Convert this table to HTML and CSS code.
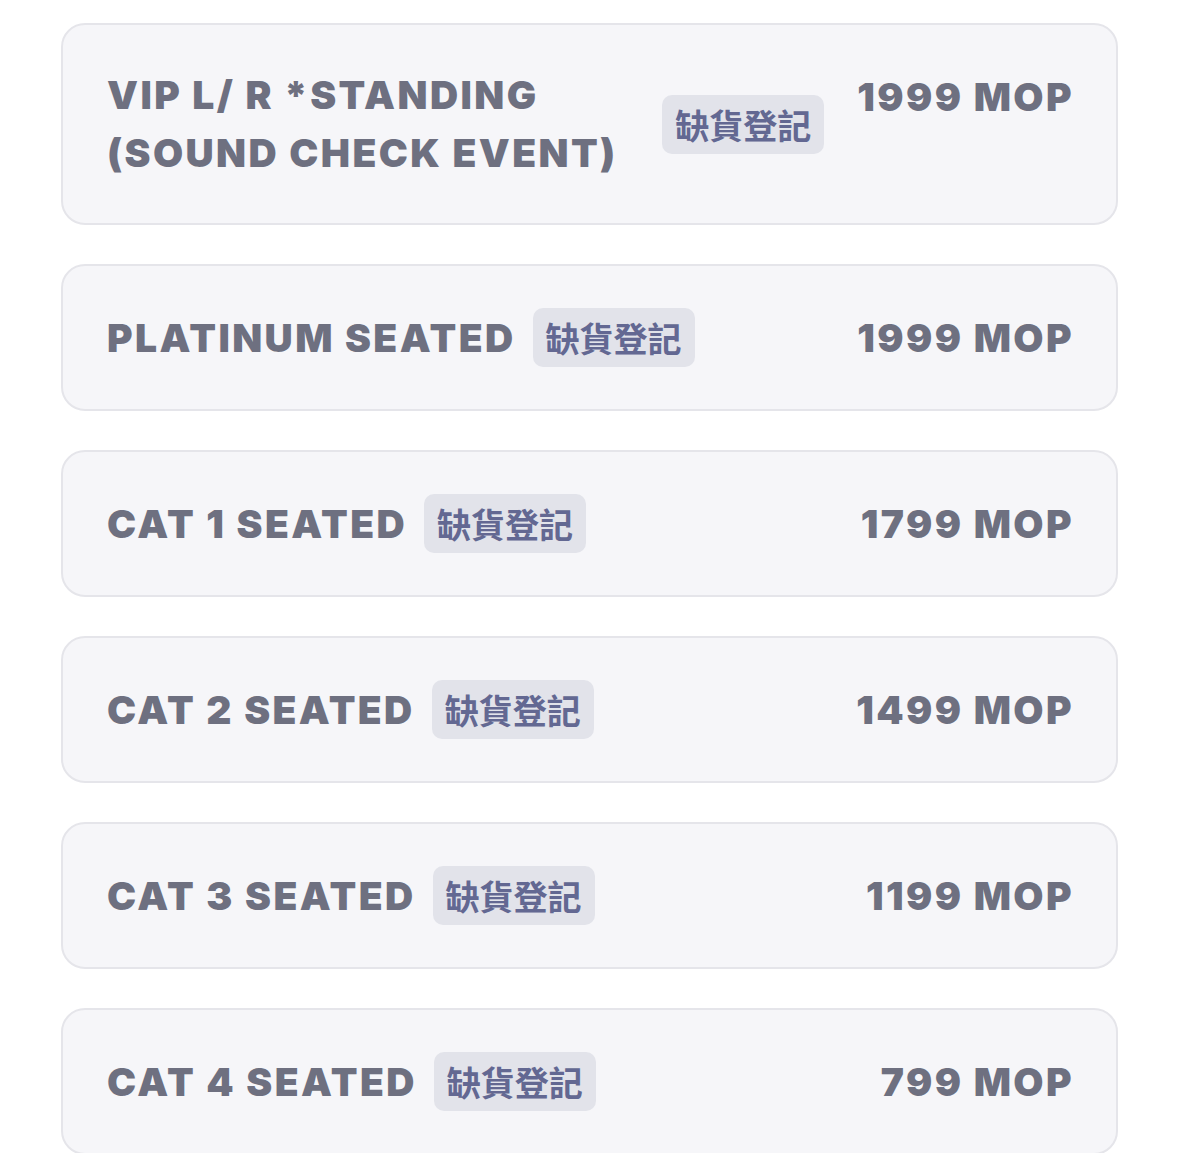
FILE: index.html
```html
<!DOCTYPE html>
<html>
<head>
  <meta name="viewport" content="width=device-width">
  <title>Tickets</title>
  <link rel="stylesheet" href="styles.css">
</head>
<body>
  <div class="list">
    <div class="ticket">
      <div class="info">
        <span class="name">VIP L/ R *STANDING (SOUND CHECK EVENT)</span>
        <span class="tag">缺貨登記</span>
      </div>
      <span class="price">1999 MOP</span>
    </div>
    <div class="ticket">
      <div class="info">
        <span class="name">PLATINUM SEATED</span>
        <span class="tag">缺貨登記</span>
      </div>
      <span class="price">1999 MOP</span>
    </div>
    <div class="ticket">
      <div class="info">
        <span class="name">CAT 1 SEATED</span>
        <span class="tag">缺貨登記</span>
      </div>
      <span class="price">1799 MOP</span>
    </div>
    <div class="ticket">
      <div class="info">
        <span class="name">CAT 2 SEATED</span>
        <span class="tag">缺貨登記</span>
      </div>
      <span class="price">1499 MOP</span>
    </div>
    <div class="ticket">
      <div class="info">
        <span class="name">CAT 3 SEATED</span>
        <span class="tag">缺貨登記</span>
      </div>
      <span class="price">1199 MOP</span>
    </div>
    <div class="ticket">
      <div class="info">
        <span class="name">CAT 4 SEATED</span>
        <span class="tag">缺貨登記</span>
      </div>
      <span class="price">799 MOP</span>
    </div>
  </div>
</body>
</html>
```
FILE: styles.css
```css
*, *:before, *:after {
  box-sizing: border-box;
}
body {
  margin: 0;
  padding: 0;
  background: #ffffff;
  font-family: Inter, "Noto Sans", sans-serif;
}

.list {
  display: flex;
  flex-direction: column;
  gap: 39px;
  padding: 23px 61px 0 61px;
}

.ticket {
  display: flex;
  align-items: flex-start;
  justify-content: space-between;
  gap: 33px;
  padding: 41px 42px 41px 44px;
  background: #f6f6f9;
  border: 2px solid #e5e5ea;
  border-radius: 24px;
}

.info {
  display: flex;
  align-items: center;
  gap: 17px;
  min-height: 61px;
}

.name, .price {
  font-size: 39px;
  font-weight: 900;
  line-height: 58px;
  letter-spacing: 2.4px;
  color: #6e7080;
}

.price {
  white-space: nowrap;
  line-height: 61px;
}

.tag {
  flex-shrink: 0;
  display: flex;
  align-items: center;
  height: 59px;
  padding: 0 13px;
  border-radius: 10px;
  background: #e2e3ea;
  color: #636892;
  font-family: "Noto Sans CJK TC", sans-serif;
  font-size: 34px;
  font-weight: 600;
}
```
